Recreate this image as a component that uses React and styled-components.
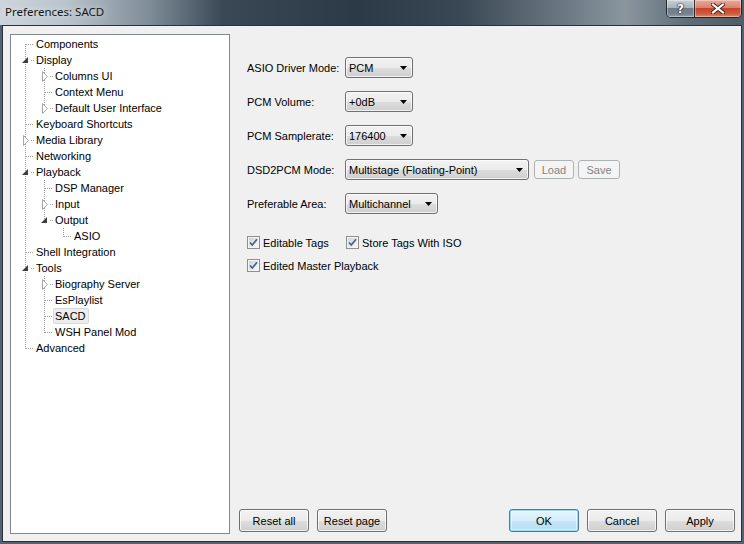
import React from "react";
import styled, { createGlobalStyle } from "styled-components";

const GlobalStyle = createGlobalStyle`
  html, body {
    margin: 0;
    padding: 0;
    background: #ffffff;
  }
  body {
    font-family: "Liberation Sans", Arial, sans-serif;
    font-size: 11px;
    color: #000;
  }
`;

const Window = styled.div`
  width: 744px;
  height: 544px;
  display: flex;
  flex-direction: column;
  background: #55636f;
  overflow: hidden;
`;

const TitleBar = styled.div`
  height: 25px;
  flex-shrink: 0;
  display: flex;
  align-items: flex-start;
  justify-content: space-between;
  background: linear-gradient(
    90deg,
    #cdd5dc 0%,
    #b9c3cb 9%,
    #7f8d99 20%,
    #3a4856 30%,
    #2c3946 48%,
    #3a4855 62%,
    #6c7984 76%,
    #8a959e 84%,
    #5d6b77 93%,
    #4f5d69 100%
  );
`;

const Title = styled.div`
  padding-left: 5px;
  line-height: 23px;
  font-family: "Noto Sans", "Liberation Sans", sans-serif;
  font-size: 11.5px;
  color: #161616;
  text-shadow: 0 0 6px rgba(255, 255, 255, 0.8);
`;

const Controls = styled.div`
  display: flex;
  margin-right: 2px;
  border: 1px solid rgba(20, 28, 36, 0.85);
  border-top: none;
  border-radius: 0 0 5px 5px;
  overflow: hidden;
`;

const CtrlButton = styled.div`
  width: ${(p) => p.$w}px;
  height: 17px;
  display: flex;
  align-items: center;
  justify-content: center;
  color: #fff;
  font-family: "DejaVu Sans", sans-serif;
  font-weight: bold;
  font-size: 12px;
  text-shadow: 0 0 2px #000, 0 0 1px #000;
  background: ${(p) =>
    p.$close
      ? "linear-gradient(#e9a99a 0%, #d98371 45%, #c8442b 50%, #cf5a3d 80%, #e0876a 100%)"
      : "linear-gradient(#c9d1d8 0%, #a8b3bc 45%, #6f7d89 50%, #75838f 80%, #93a0aa 100%)"};
  box-shadow: inset 0 0 0 1px rgba(255, 255, 255, 0.35);
  & + & {
    border-left: 1px solid rgba(20, 28, 36, 0.85);
  }
`;

const Frame = styled.div`
  flex: 1;
  display: flex;
  padding: 0 2px 2px 2px;
  min-height: 0;
`;

const Client = styled.div`
  flex: 1;
  display: flex;
  background: #f0f0f0;
  border: 1px solid #26323d;
  padding: 8px 6px 7px 7px;
`;

const Tree = styled.div`
  width: 220px;
  flex-shrink: 0;
  box-sizing: border-box;
  border: 1px solid #828790;
  background: #fff;
  padding: 1px 0 0 4px;
`;

const TreeRow = styled.div`
  display: flex;
  align-items: center;
  height: 16px;
`;

const TreeLabel = styled.span`
  box-sizing: border-box;
  height: 16px;
  line-height: 14px;
  padding: 0 2px 0 1px;
  border: 1px solid ${(p) => (p.$selected ? "#d9d9d9" : "transparent")};
  border-radius: 2px;
  background: ${(p) => (p.$selected ? "#ededed" : "transparent")};
  white-space: nowrap;
`;

const RightPane = styled.div`
  flex: 1;
  display: flex;
  flex-direction: column;
  margin-left: 9px;
`;

const Form = styled.div`
  flex: 1;
  padding: 23px 0 0 8px;
`;

const FieldGrid = styled.div`
  display: grid;
  grid-template-columns: 98px auto;
  grid-auto-rows: 21px;
  row-gap: 13px;
  align-items: center;
  justify-items: start;
`;

const CheckGrid = styled.div`
  display: grid;
  grid-template-columns: 99px auto;
  grid-auto-rows: 13px;
  row-gap: 10px;
  align-items: center;
  justify-items: start;
  margin-top: 22px;
`;

const InlineGroup = styled.div`
  display: flex;
  align-items: center;
  gap: ${(p) => p.$gap || 5}px;
`;

const winGradient =
  "linear-gradient(#f2f2f2 0%, #ebebeb 50%, #dddddd 51%, #cfcfcf 100%)";

const Combo = styled.div`
  box-sizing: border-box;
  width: ${(p) => p.$w}px;
  height: 21px;
  display: flex;
  align-items: center;
  justify-content: space-between;
  padding: 0 5px 0 3px;
  border: 1px solid #707070;
  border-radius: 3px;
  background: ${winGradient};
  box-shadow: inset 0 0 0 1px rgba(255, 255, 255, 0.7);
  white-space: nowrap;
`;

const Button = styled.button`
  box-sizing: border-box;
  width: ${(p) => p.$w || 70}px;
  height: ${(p) => p.$h || 23}px;
  padding: 0;
  font-family: "Liberation Sans", Arial, sans-serif;
  font-size: 11px;
  color: #000;
  border: 1px solid ${(p) => (p.$primary ? "#3c7fb1" : "#707070")};
  border-radius: 3px;
  background: ${(p) =>
    p.$primary
      ? "linear-gradient(#e6f4fc 0%, #d6eefb 50%, #c3e5f8 51%, #b3ddf4 100%)"
      : winGradient};
  box-shadow: ${(p) =>
    p.$primary
      ? "inset 0 0 0 1px #9cd8f3, inset 0 0 0 2px rgba(255,255,255,0.5)"
      : "inset 0 0 0 1px rgba(255,255,255,0.7)"};

  &:disabled {
    border-color: #adb2b5;
    background: #f4f4f4;
    color: #838383;
    box-shadow: none;
  }
`;

const Footer = styled.div`
  display: flex;
  justify-content: space-between;
  margin-bottom: 2px;
`;

const ButtonGroup = styled.div`
  display: flex;
  gap: 8px;
`;

const CheckLabel = styled.label`
  display: flex;
  align-items: center;
  gap: 3px;
  white-space: nowrap;
`;

const dotted = {
  stroke: "#a0a0a0",
  strokeWidth: 1,
  strokeDasharray: "1 1",
  shapeRendering: "crispEdges",
};

const treeItems = [
  { l: 0, t: "Components" },
  { l: 0, t: "Display", exp: "open" },
  { l: 1, t: "Columns UI", exp: "closed" },
  { l: 1, t: "Context Menu" },
  { l: 1, t: "Default User Interface", exp: "closed" },
  { l: 0, t: "Keyboard Shortcuts" },
  { l: 0, t: "Media Library", exp: "closed" },
  { l: 0, t: "Networking" },
  { l: 0, t: "Playback", exp: "open" },
  { l: 1, t: "DSP Manager" },
  { l: 1, t: "Input", exp: "closed" },
  { l: 1, t: "Output", exp: "open" },
  { l: 2, t: "ASIO" },
  { l: 0, t: "Shell Integration" },
  { l: 0, t: "Tools", exp: "open" },
  { l: 1, t: "Biography Server", exp: "closed" },
  { l: 1, t: "EsPlaylist" },
  { l: 1, t: "SACD", sel: true },
  { l: 1, t: "WSH Panel Mod" },
  { l: 0, t: "Advanced" },
];

const hasNextSibling = (items, idx) => {
  const lv = items[idx].l;
  for (let j = idx + 1; j < items.length; j++) {
    if (items[j].l < lv) return false;
    if (items[j].l === lv) return true;
  }
  return false;
};

const buildRows = (items) =>
  items.map((it, i) => {
    const cells = [];
    for (let k = 0; k < it.l; k++) {
      let a = i - 1;
      while (a >= 0 && items[a].l !== k) a--;
      cells.push({ type: "pass", on: a >= 0 && hasNextSibling(items, a) });
    }
    cells.push({
      type: "node",
      first: i === 0,
      last: !hasNextSibling(items, i),
      exp: it.exp,
    });
    return { ...it, cells };
  });

const TreeCell = ({ cell }) => {
  if (cell.type === "pass") {
    return (
      <svg width="19" height="16" style={{ flexShrink: 0 }}>
        {cell.on && <line x1="10.5" y1="0" x2="10.5" y2="16" style={dotted} />}
      </svg>
    );
  }
  const y1 = cell.first ? 8 : 0;
  const y2 = cell.last ? 9 : 16;
  return (
    <svg width="19" height="16" style={{ flexShrink: 0 }}>
      <line x1="10.5" y1={y1} x2="10.5" y2={y2} style={dotted} />
      {cell.exp ? (
        <line x1="16" y1="8.5" x2="19" y2="8.5" style={dotted} />
      ) : (
        <line x1="11" y1="8.5" x2="19" y2="8.5" style={dotted} />
      )}
      {cell.exp === "closed" && (
        <polygon
          points="8.5,3.5 13.5,8.5 8.5,13.5"
          fill="#fff"
          stroke="#a6a6a6"
          strokeWidth="1"
        />
      )}
      {cell.exp === "open" && (
        <polygon points="13,5 13,11 7,11" fill="#3c3c3c" />
      )}
    </svg>
  );
};

const ComboArrow = () => (
  <svg width="7" height="4" viewBox="0 0 7 4" style={{ flexShrink: 0 }}>
    <polygon points="0,0 7,0 3.5,4" fill="#000" />
  </svg>
);

const Checkbox = () => (
  <svg width="13" height="13" viewBox="0 0 13 13" style={{ flexShrink: 0 }}>
    <defs>
      <linearGradient id="cbg" x1="0" y1="0" x2="1" y2="1">
        <stop offset="0" stopColor="#cfd3d8" />
        <stop offset="1" stopColor="#f7f7f7" />
      </linearGradient>
    </defs>
    <rect x="0.5" y="0.5" width="12" height="12" fill="#f4f4f4" stroke="#8e8f8f" />
    <rect x="2" y="2" width="9" height="9" fill="url(#cbg)" />
    <path
      d="M3 6.5 L5.3 9 L10 3.3"
      fill="none"
      stroke="#4a5f8c"
      strokeWidth="1.7"
    />
  </svg>
);

const CloseGlyph = () => (
  <svg width="14" height="11" viewBox="0 0 14 11">
    <path
      d="M2 1.5 L12 9.5 M12 1.5 L2 9.5"
      stroke="#33241f"
      strokeWidth="4"
      strokeLinecap="square"
    />
    <path
      d="M2 1.5 L12 9.5 M12 1.5 L2 9.5"
      stroke="#fff"
      strokeWidth="2.2"
      strokeLinecap="square"
    />
  </svg>
);

const rows = buildRows(treeItems);

const ComboBox = ({ w, value }) => (
  <Combo $w={w}>
    <span>{value}</span>
    <ComboArrow />
  </Combo>
);

export default function App() {
  return (
    <>
      <GlobalStyle />
      <Window>
        <TitleBar>
          <Title>Preferences: SACD</Title>
          <Controls>
            <CtrlButton $w={27}>?</CtrlButton>
            <CtrlButton $w={46} $close>
              <CloseGlyph />
            </CtrlButton>
          </Controls>
        </TitleBar>
        <Frame>
          <Client>
            <Tree>
              {rows.map((r) => (
                <TreeRow key={r.t}>
                  {r.cells.map((c, i) => (
                    <TreeCell key={i} cell={c} />
                  ))}
                  <TreeLabel $selected={r.sel}>{r.t}</TreeLabel>
                </TreeRow>
              ))}
            </Tree>
            <RightPane>
              <Form>
                <FieldGrid>
                  <span>ASIO Driver Mode:</span>
                  <ComboBox w={68} value="PCM" />
                  <span>PCM Volume:</span>
                  <ComboBox w={68} value="+0dB" />
                  <span>PCM Samplerate:</span>
                  <ComboBox w={68} value="176400" />
                  <span>DSD2PCM Mode:</span>
                  <InlineGroup>
                    <ComboBox w={184} value="Multistage (Floating-Point)" />
                    <InlineGroup $gap={4}>
                      <Button $w={40} $h={19} disabled>
                        Load
                      </Button>
                      <Button $w={42} $h={19} disabled>
                        Save
                      </Button>
                    </InlineGroup>
                  </InlineGroup>
                  <span>Preferable Area:</span>
                  <ComboBox w={93} value="Multichannel" />
                </FieldGrid>
                <CheckGrid>
                  <CheckLabel>
                    <Checkbox />
                    Editable Tags
                  </CheckLabel>
                  <CheckLabel>
                    <Checkbox />
                    Store Tags With ISO
                  </CheckLabel>
                  <CheckLabel>
                    <Checkbox />
                    Edited Master Playback
                  </CheckLabel>
                </CheckGrid>
              </Form>
              <Footer>
                <ButtonGroup>
                  <Button>Reset all</Button>
                  <Button>Reset page</Button>
                </ButtonGroup>
                <ButtonGroup>
                  <Button $primary>OK</Button>
                  <Button>Cancel</Button>
                  <Button>Apply</Button>
                </ButtonGroup>
              </Footer>
            </RightPane>
          </Client>
        </Frame>
      </Window>
    </>
  );
}
